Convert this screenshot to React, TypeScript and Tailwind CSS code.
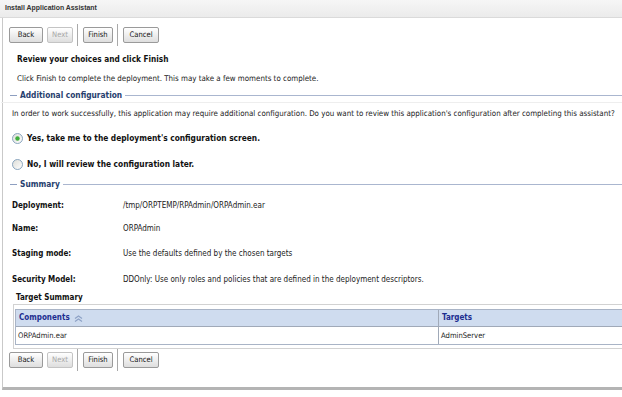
import React from "react";

const font = "font-['Tahoma','DejaVu_Sans_Condensed','DejaVu_Sans',sans-serif]";

function Btn({ label, w, disabled }: { label: string; w: string; disabled?: boolean }) {
  return (
    <button
      className={`${w} h-[16px] rounded-[2px] border bg-gradient-to-b from-white to-[#dedede] text-[7.6px] leading-none ${
        disabled ? "text-[#a8a8a8] border-[#c4c4c4]" : "text-[#111] border-[#9a9a9a]"
      }`}
    >
      {label}
    </button>
  );
}

function Sep() {
  return <div className="mx-[4px] -my-[3px] h-[22px] w-[2px] border-l border-[#a9a9a9] border-r border-r-white" />;
}

function Buttons() {
  return (
    <div className="flex items-center h-[16px]">
      <Btn label="Back" w="w-[34px]" />
      <div className="w-[4px]" />
      <Btn label="Next" w="w-[26px]" disabled />
      <Sep />
      <Btn label="Finish" w="w-[30px]" />
      <Sep />
      <Btn label="Cancel" w="w-[36px]" />
    </div>
  );
}

function Section({ title }: { title: string }) {
  return (
    <div className="flex items-center h-[14px] pl-[1px]">
      <div className="w-[7px] h-px bg-[#8e9fc0]" />
      <span className="mx-[3px] text-[8.3px] font-bold text-[#27406e]">{title}</span>
      <div className="flex-1 h-px bg-[#aab6cf]" />
    </div>
  );
}

function Radio({ checked }: { checked?: boolean }) {
  return (
    <svg width="11" height="11" viewBox="0 0 11 11" className="shrink-0">
      <defs>
        <linearGradient id={checked ? "rg1" : "rg2"} x1="0" y1="0" x2="1" y2="1">
          <stop offset="0" stopColor="#dcdcd6" />
          <stop offset="1" stopColor="#ffffff" />
        </linearGradient>
      </defs>
      <circle cx="5.5" cy="5.5" r="5" fill={`url(#${checked ? "rg1" : "rg2"})`} stroke="#7f9db9" strokeWidth="0.9" />
      {checked && <circle cx="5.5" cy="5.5" r="2.2" fill="#3fae3b" />}
    </svg>
  );
}

function Row({ label, value, mt }: { label: string; value: string; mt: string }) {
  return (
    <div className={`flex items-center h-[14px] ${mt}`}>
      <div className="w-[111px] shrink-0 text-[8px] font-bold text-[#111]">{label}</div>
      <div className="text-[8px] text-[#222] whitespace-nowrap">{value}</div>
    </div>
  );
}

export default function App() {
  return (
    <div className={`w-[622px] h-[397px] overflow-hidden bg-white ${font}`}>
      <div className="h-[18px] flex items-center pl-[5px] bg-gradient-to-b from-[#f6f6f6] to-[#ebebeb] border-b border-[#dadada]">
        <span className="font-['Liberation_Sans',Arial,sans-serif] text-[6.9px] font-bold text-[#333]">Install Application Assistant</span>
      </div>
      <div className="ml-[2px] h-[372px] border-l border-b-[3px] border-[#c9c9c9] border-b-[#b4b4b4] pl-[6px]">
        <div className="pt-[9px]">
          <Buttons />
        </div>
        <div className="pl-[8px] mt-[9px] flex flex-col">
          <div className="h-[14px] flex items-center text-[8.2px] font-bold text-[#111]">
            Review your choices and click Finish
          </div>
          <div className="mt-[6px] h-[14px] flex items-center text-[7.9px] text-[#222] whitespace-nowrap">
            Click Finish to complete the deployment. This may take a few moments to complete.
          </div>
        </div>
        <div className="mt-[2px]">
          <Section title="Additional configuration" />
          <div className="-ml-[8px] h-px bg-[#eeeeee]" />
          <div className="mt-[4px] pl-[3px] h-[14px] flex items-center text-[7.9px] text-[#222] whitespace-nowrap">
            In order to work successfully, this application may require additional configuration. Do you want to review this application's configuration after completing this assistant?
          </div>
          <div className="mt-[10px] pl-[3px] h-[14px] flex items-center gap-[4px]">
            <Radio checked />
            <span className="text-[8.3px] font-bold text-[#111]">Yes, take me to the deployment's configuration screen.</span>
          </div>
          <div className="mt-[12px] pl-[3px] h-[14px] flex items-center gap-[4px]">
            <Radio />
            <span className="text-[8.3px] font-bold text-[#111]">No, I will review the configuration later.</span>
          </div>
        </div>
        <div className="mt-[6px]">
          <Section title="Summary" />
          <div className="pl-[3px] flex flex-col mt-[8px]">
            <Row mt="mt-0" label="Deployment:" value="/tmp/ORPTEMP/RPAdmin/ORPAdmin.ear" />
            <Row mt="mt-[9px]" label="Name:" value="ORPAdmin" />
            <Row mt="mt-[11px]" label="Staging mode:" value="Use the defaults defined by the chosen targets" />
            <Row mt="mt-[12px]" label="Security Model:" value="DDOnly: Use only roles and policies that are defined in the deployment descriptors." />
          </div>
          <div className="pl-[7px] mt-[4px] h-[14px] flex items-center text-[8px] font-bold text-[#111]">Target Summary</div>
          <div className="ml-[4px] mt-[-1px] border border-r-0 border-[#d2d2d2] pt-[4px] pl-[1px] pb-[3px]">
            <div className="border border-r-0 border-[#a9b4c6]">
              <div className="flex h-[17px] bg-[#cfdcef] border-b border-[#a0a9b8]">
                <div className="w-[423px] flex items-center pl-[3px] border-r border-[#a0a9b8] gap-[4px]">
                  <span className="text-[8px] font-bold text-[#1c2d8f]">Components</span>
                  <svg width="9" height="7" viewBox="0 0 9 7">
                    <path d="M1 3.5 L4.5 1 L8 3.5 M1 6.5 L4.5 4 L8 6.5" fill="none" stroke="#8ea2c6" strokeWidth="1.2" />
                  </svg>
                </div>
                <div className="flex-1 flex items-center pl-[3px]">
                  <span className="text-[8px] font-bold text-[#1c2d8f]">Targets</span>
                </div>
              </div>
              <div className="flex h-[17px] bg-white">
                <div className="w-[423px] flex items-center pl-[2px] border-r border-[#a0a9b8] text-[7.6px] text-[#222]">ORPAdmin.ear</div>
                <div className="flex-1 flex items-center pl-[2px] text-[7.6px] text-[#222]">AdminServer</div>
              </div>
            </div>
          </div>
          <div className="mt-[3px]">
            <Buttons />
          </div>
        </div>
      </div>
    </div>
  );
}
